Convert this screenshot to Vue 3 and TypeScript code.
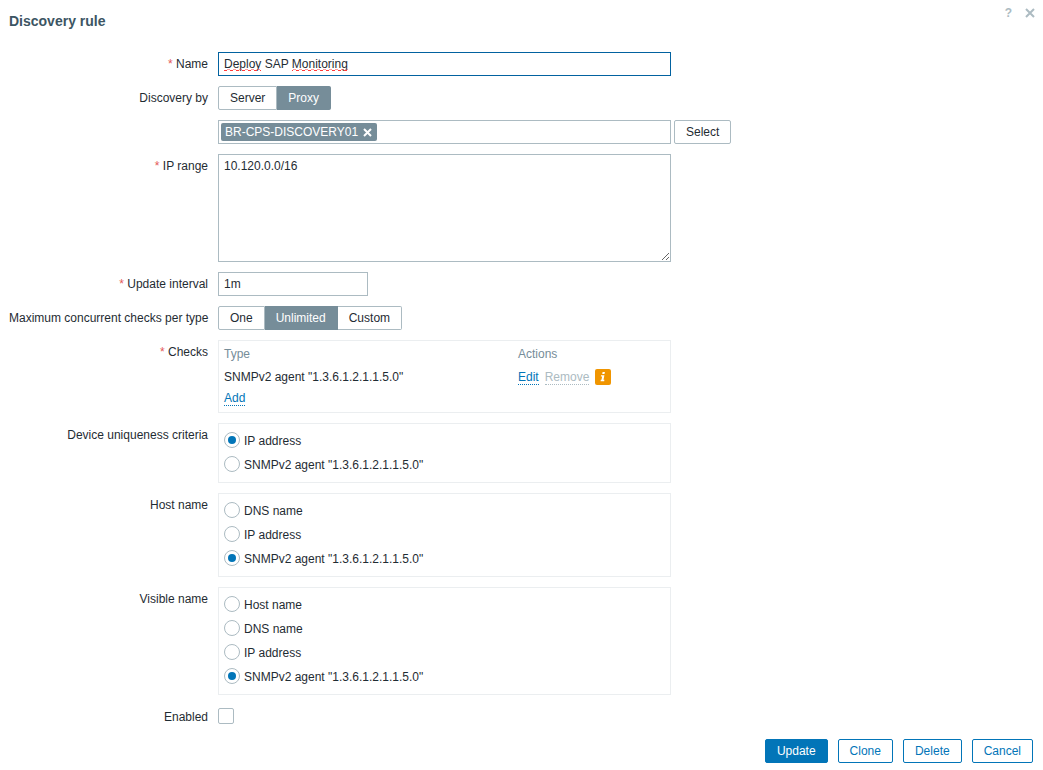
<script setup lang="ts">
import { ref } from 'vue'

interface RadioGroup {
  id: string
  label: string
  options: string[]
}

const snmp = 'SNMPv2 agent "1.3.6.1.2.1.1.5.0"'

const name = ref('Deploy SAP Monitoring')
const discoveryBy = ref('Proxy')
const ipRange = ref('10.120.0.0/16')
const interval = ref('1m')
const concurrency = ref('Unlimited')
const enabled = ref(false)

const groups: RadioGroup[] = [
  { id: 'uniqueness', label: 'Device uniqueness criteria', options: ['IP address', snmp] },
  { id: 'host', label: 'Host name', options: ['DNS name', 'IP address', snmp] },
  { id: 'visible', label: 'Visible name', options: ['Host name', 'DNS name', 'IP address', snmp] },
]

const selected = ref<Record<string, string>>({
  uniqueness: 'IP address',
  host: snmp,
  visible: snmp,
})
</script>

<template>
  <main class="dialog">
    <header class="head">
      <h1>Discovery rule</h1>
      <div class="head-tools">
        <a class="help" href="#" aria-label="Help">?</a>
        <button class="close" type="button" aria-label="Close">
          <svg width="10" height="10" viewBox="0 0 10 10"><path d="M1 1l8 8M9 1L1 9" /></svg>
        </button>
      </div>
    </header>

    <form class="form" @submit.prevent>
      <label class="label required" for="name">Name</label>
      <div class="field name-field">
        <input id="name" v-model="name" class="text focused" type="text" />
        <svg class="spelling" width="130" height="2" viewBox="0 0 130 2" aria-hidden="true">
          <defs>
            <pattern id="wave" width="6" height="2" patternUnits="userSpaceOnUse">
              <path d="M0 1h3v1H0z" />
              <path d="M3 0h3v1H3z" opacity=".5" />
            </pattern>
          </defs>
          <rect x="0" width="37" height="2" fill="url(#wave)" />
          <rect x="68" width="56" height="2" fill="url(#wave)" />
        </svg>
      </div>

      <span id="by-label" class="label">Discovery by</span>
      <div class="segmented" role="radiogroup" aria-labelledby="by-label">
        <label v-for="o in ['Server', 'Proxy']" :key="o" :class="{ on: discoveryBy === o }">
          <input v-model="discoveryBy" type="radio" name="by" :value="o" />{{ o }}
        </label>
      </div>

      <div class="proxy-row">
        <div class="field multiselect">
          <span class="tag">BR-CPS-DISCOVERY01
            <button type="button" aria-label="Remove proxy">
              <svg width="9" height="9" viewBox="0 0 9 9"><path d="M1 1l7 7M8 1L1 8" /></svg>
            </button>
          </span>
        </div>
        <button class="btn grey" type="button">Select</button>
      </div>

      <label class="label required" for="range">IP range</label>
      <textarea id="range" v-model="ipRange" class="field text area" spellcheck="false"></textarea>

      <label class="label required" for="interval">Update interval</label>
      <input id="interval" v-model="interval" class="text short" type="text" />

      <span id="max-label" class="label">Maximum concurrent checks per type</span>
      <div class="segmented" role="radiogroup" aria-labelledby="max-label">
        <label v-for="o in ['One', 'Unlimited', 'Custom']" :key="o" :class="{ on: concurrency === o }">
          <input v-model="concurrency" type="radio" name="max" :value="o" />{{ o }}
        </label>
      </div>

      <span class="label required">Checks</span>
      <div class="field box checks">
        <table>
          <thead>
            <tr><th>Type</th><th>Actions</th></tr>
          </thead>
          <tbody>
            <tr>
              <td>{{ snmp }}</td>
              <td>
                <div class="actions">
                  <button class="link" type="button">Edit</button>
                  <button class="link" type="button" disabled>Remove</button>
                  <button class="info" type="button" aria-label="Information">
                    <svg width="16" height="16" viewBox="0 0 16 16">
                      <path d="M7.6 3h2.3l-.4 2H7.2zM6 6.2h3.4l-.9 4.6h.9l-.2 1.4H5.6l.2-1.4h.7l.6-3.2H5.8z" />
                    </svg>
                  </button>
                </div>
              </td>
            </tr>
            <tr>
              <td class="add" colspan="2"><button class="link" type="button">Add</button></td>
            </tr>
          </tbody>
        </table>
      </div>

      <template v-for="g in groups" :key="g.id">
        <span :id="g.id" class="label">{{ g.label }}</span>
        <div class="field box radios" role="radiogroup" :aria-labelledby="g.id">
          <label v-for="o in g.options" :key="o">
            <input v-model="selected[g.id]" type="radio" :name="g.id + '-option'" :value="o" />
            <span>{{ o }}</span>
          </label>
        </div>
      </template>

      <label class="label" for="enabled">Enabled</label>
      <div class="check-cell"><input id="enabled" v-model="enabled" type="checkbox" /></div>
    </form>

    <footer class="foot">
      <button class="btn primary" type="button">Update</button>
      <button class="btn" type="button">Clone</button>
      <button class="btn" type="button">Delete</button>
      <button class="btn" type="button">Cancel</button>
    </footer>
  </main>
</template>

<style>
body {
  margin: 0;
  background: #fff;
}
</style>

<style scoped>
* {
  box-sizing: border-box;
}

.dialog {
  padding: 0 10px 7px 9px;
  color: #1f2c33;
  font: 12px/14px "Liberation Sans", Arial, sans-serif;
}

button,
input,
textarea {
  margin: 0;
  color: inherit;
  font: inherit;
}

button {
  cursor: pointer;
}

.head {
  display: flex;
  justify-content: space-between;
  height: 52px;
}

h1 {
  margin: 12px 0 0;
  color: #3c5563;
  font-size: 14px;
  line-height: 18px;
}

.head-tools {
  display: flex;
  gap: 12px;
  height: 26px;
  align-items: center;
  margin-right: -3px;
}

.help {
  color: #acbbc2;
  font-weight: bold;
  text-decoration: none;
}

.close {
  display: flex;
  padding: 0 1px;
  border: 0;
  background: none;
}

.close path {
  fill: none;
  stroke: #acbbc2;
  stroke-width: 2;
}

.form {
  display: grid;
  grid-template-columns: 199px minmax(0, 1fr);
  gap: 10px;
  align-items: start;
}

.label {
  padding-top: 5px;
  text-align: right;
  white-space: nowrap;
}

.required::before {
  content: "* ";
  color: #e45959;
}

.field {
  width: 100%;
  max-width: 453px;
}

.text {
  height: 24px;
  padding: 0 5px;
  border: 1px solid #acbbc2;
  border-radius: 0;
  outline: 0;
  background: #fff;
}

.name-field {
  position: relative;
}

.name-field .text {
  display: block;
  width: 100%;
}

.name-field .focused {
  border-color: #0262a0;
}

.spelling {
  position: absolute;
  left: 6px;
  top: 17px;
  fill: #ff3b3b;
  pointer-events: none;
}

.short {
  width: 150px;
}

.area {
  display: block;
  height: 108px;
  padding: 4px 5px;
  resize: vertical;
}

.segmented {
  display: flex;
}

.segmented label {
  position: relative;
  height: 24px;
  padding: 4px 11px;
  border: 1px solid #acbbc2;
  border-left-width: 0;
  cursor: pointer;
}

.segmented label:first-child {
  border-left-width: 1px;
  border-radius: 2px 0 0 2px;
}

.segmented label:last-child {
  border-radius: 0 2px 2px 0;
}

.segmented .on {
  border-color: #768d99;
  background: #768d99;
  color: #fff;
}

.segmented input {
  position: absolute;
  inset: 0;
  opacity: 0;
}

.proxy-row {
  display: flex;
  grid-column: 2;
  gap: 3px;
}

.multiselect {
  display: flex;
  height: 24px;
  padding: 2px;
  border: 1px solid #acbbc2;
}

.tag {
  display: flex;
  align-items: center;
  gap: 5px;
  height: 18px;
  padding: 0 5px 0 4px;
  border-radius: 2px;
  background: #768d99;
  color: #fff;
}

.tag button {
  display: flex;
  padding: 0;
  border: 0;
  background: none;
}

.tag path {
  fill: none;
  stroke: #fff;
  stroke-width: 2;
}

.btn {
  height: 24px;
  padding: 0 11px;
  border: 1px solid #0275b8;
  border-radius: 2px;
  background: #fff;
  color: #0275b8;
}

.grey {
  border-color: #acbbc2;
  color: #1f2c33;
}

.primary {
  background: #0275b8;
  color: #fff;
}

.box {
  border: 1px solid #ebeef0;
}

.checks {
  padding: 4px 5px 3px;
}

table {
  width: 100%;
  border-collapse: collapse;
}

th,
td {
  padding: 0;
  height: 18px;
  text-align: left;
  vertical-align: middle;
}

th {
  width: 294px;
  color: #768d99;
  font-weight: normal;
}

th:last-child {
  width: auto;
}

tbody tr:first-child td {
  height: 28px;
}

.add {
  vertical-align: top;
}

.add .link {
  display: block;
}

.actions {
  display: flex;
  align-items: center;
  gap: 6px;
}

.link {
  padding: 0;
  border: 0;
  border-bottom: 1px dotted #0275b8;
  background: none;
  color: #0275b8;
}

.link:disabled {
  border-color: #acbbc2;
  color: #acbbc2;
}

.info {
  display: flex;
  padding: 0;
  border: 0;
  border-radius: 2px;
  background: #f09500;
}

.info path {
  fill: #fff;
}

.radios {
  display: grid;
  gap: 8px;
  padding: 8px 5px 10px;
}

.radios label {
  display: flex;
  align-items: center;
  gap: 4px;
  height: 16px;
}

.radios span {
  padding-top: 2px;
}

.radios input,
.check-cell input {
  appearance: none;
  width: 16px;
  height: 16px;
  border: 1px solid #acbbc2;
  background: #fff;
}

.radios input {
  display: grid;
  place-items: center;
  border-radius: 50%;
}

.radios input:checked::before {
  content: "";
  width: 8px;
  height: 8px;
  border-radius: 50%;
  background: #0275b8;
}

.check-cell {
  display: flex;
  height: 24px;
  padding-top: 3px;
}

.check-cell input {
  border-radius: 2px;
}

.check-cell input:checked {
  background: #0275b8;
}

.foot {
  display: flex;
  justify-content: flex-end;
  gap: 10px;
  margin-top: 10px;
}
</style>
